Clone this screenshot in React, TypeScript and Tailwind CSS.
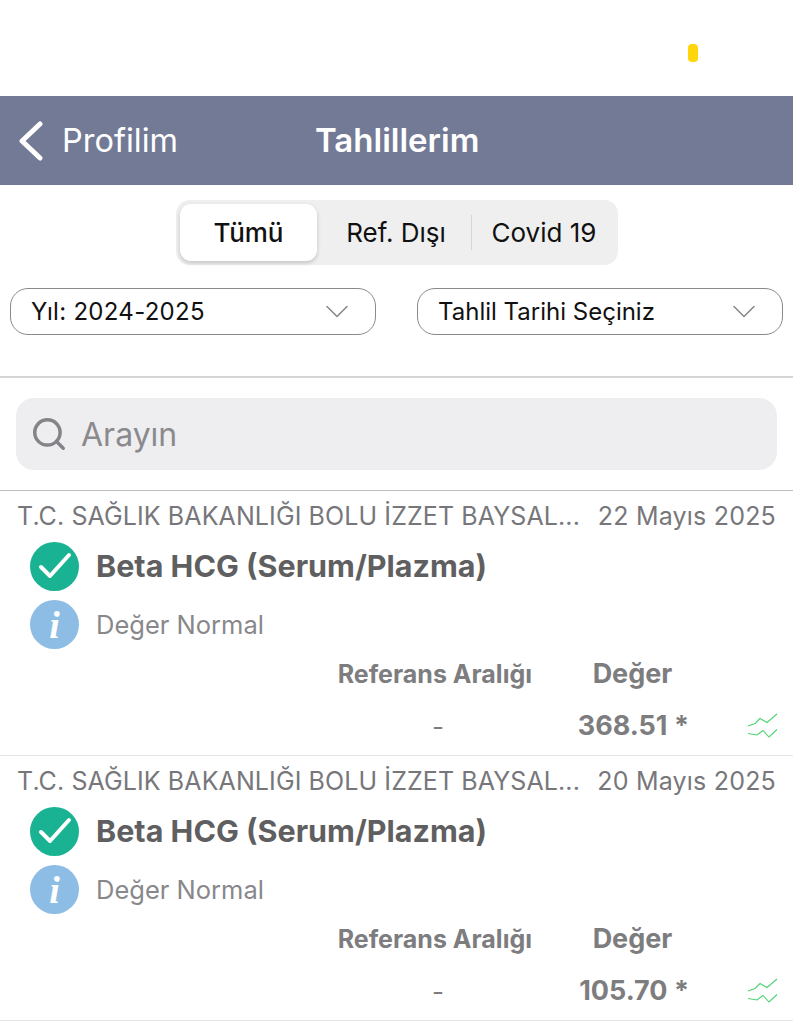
import { FC } from "react";
import { Search } from "lucide-react";

interface ResultProps {
    date: string;
    value: string;
}

const TrendIcon: FC = () => (
    <svg width="32" height="26" viewBox="0 0 32 26" fill="none" stroke="#4cd472" strokeWidth="1.1">
        <path d="M1 13 L8 10.5 L13 5.5 L20 9.5 L30 1" />
        <path d="M1 20.5 L10 22 L16 17.5 L22 24 L30 16.5" />
    </svg>
);

const Chevron: FC = () => (
    <svg width="22" height="13" viewBox="0 0 22 13" fill="none" stroke="#8a8a8e" strokeWidth="1.6" strokeLinecap="round" strokeLinejoin="round">
        <path d="M1 1.5 L11 11.5 L21 1.5" />
    </svg>
);

const ResultRow: FC<ResultProps> = (props) => (
    <div className="h-[265px] border-b border-[#e4e4e6] flex flex-col">
        <div className="flex justify-between pl-[17px] pr-[17px] pt-[10px] h-[50px] text-[25px] leading-[30px] text-[#77777b] tracking-[0.1px]">
            <span className="w-[575px] truncate">T.C. SAĞLIK BAKANLIĞI BOLU İZZET BAYSAL...</span>
            <span className="tracking-[0.2px]">{props.date}</span>
        </div>
        <div className="flex items-center h-[50px] pl-[30px] gap-[17px]">
            <div className="w-[49px] h-[49px] rounded-full bg-[#19b393] flex items-center justify-center">
                <svg width="34" height="28" viewBox="0 0 34 28" fill="none" stroke="white" strokeWidth="4" strokeLinecap="round" strokeLinejoin="round">
                    <path d="M3 15 L12 24 L31 3" />
                </svg>
            </div>
            <span className="text-[30.5px] leading-[36px] font-bold text-[#5f5f61]">Beta HCG (Serum/Plazma)</span>
        </div>
        <div className="flex items-center h-[49px] mt-[9px] pl-[30px] gap-[17px]">
            <div className="w-[49px] h-[49px] rounded-full bg-[#8dbde4] flex items-center justify-center">
                <span className="text-[38px] leading-none font-bold italic text-white font-['Liberation_Serif',serif]">i</span>
            </div>
            <span className="text-[25.5px] leading-[30px] text-[#88888b]">Değer Normal</span>
        </div>
        <div className="flex h-[51px] items-center font-bold text-[#7d7d80]">
            <span className="w-[532px] text-right whitespace-nowrap text-[25px]">Referans Aralığı</span>
            <span className="w-[201px] text-center text-[27px]">Değer</span>
        </div>
        <div className="flex h-[50px] items-center pt-[2px]">
            <span className="w-[444px] text-right text-[26px] text-[#7d7d80]">-</span>
            <span className="w-[245px] text-right text-[27px] font-bold text-[#7d7d80] whitespace-nowrap">{props.value}</span>
            <span className="ml-auto mr-[14px] flex"><TrendIcon /></span>
        </div>
    </div>
);

const App: FC = () => {
    return (
        <div className="w-[793px] h-[1024px] overflow-hidden bg-white font-['Inter',sans-serif]">
            <div className="h-[96px] pt-[44px] pl-[688px]">
                <div className="w-[10px] h-[18px] rounded-[4px] bg-[#ffd60a]"></div>
            </div>

            <div className="h-[89px] bg-[#737a96] flex items-center text-white">
                <svg className="ml-[18px]" width="26" height="40" viewBox="0 0 26 40" fill="none" stroke="white" strokeWidth="5" strokeLinecap="round" strokeLinejoin="round">
                    <path d="M22 3 L4 20 L22 37" />
                </svg>
                <span className="ml-[18px] w-[253px] pt-[2px] text-[32.5px] font-normal">Profilim</span>
                <span className="text-[33px] font-semibold">Tahlillerim</span>
            </div>

            <div className="flex justify-center pt-[15px] pl-[1px]">
                <div className="flex w-[442px] h-[65px] rounded-[14px] bg-[#efeff0] p-[4px] items-center text-[26px] text-[#111]">
                    <div className="w-[137px] h-[57px] rounded-[11px] bg-white shadow-[0_2px_4px_rgba(0,0,0,0.18)] flex items-center justify-center font-medium">Tümü</div>
                    <div className="w-[154px] pl-[4px] text-center">Ref. Dışı</div>
                    <div className="w-[1px] h-[35px] bg-[#d5d5d8]"></div>
                    <div className="flex-1 pl-[2px] text-center">Covid 19</div>
                </div>
            </div>

            <div className="flex justify-between pl-[10px] pr-[10px] mt-[23px] text-[24px] text-[#111]">
                <div className="w-[366px] h-[47px] border border-[#8a8a8e] rounded-[18px] flex items-center justify-between pl-[20px] pr-[27px]">
                    <span className="tracking-[0.3px]">Yıl: 2024-2025</span>
                    <Chevron />
                </div>
                <div className="w-[366px] h-[47px] border border-[#8a8a8e] rounded-[18px] flex items-center justify-between pl-[20px] pr-[27px]">
                    <span>Tahlil Tarihi Seçiniz</span>
                    <Chevron />
                </div>
            </div>

            <div className="mt-[41px] h-[2px] bg-[#d4d4d6]"></div>

            <div className="mx-[16px] mt-[20px] w-[761px] h-[72px] rounded-[18px] bg-[#eeeef0] flex items-center pl-[14px] gap-[13px]">
                <Search size={38} strokeWidth={2.2} className="text-[#838388]" />
                <span className="text-[32px] pt-[2px] text-[#8a8a8e]">Arayın</span>
            </div>

            <div className="mt-[20px] h-[1px] bg-[#bdbdc0]"></div>

            <ResultRow date="22 Mayıs 2025" value="368.51 *" />
            <ResultRow date="20 Mayıs 2025" value="105.70 *" />
        </div>
    );
};

export default App;
